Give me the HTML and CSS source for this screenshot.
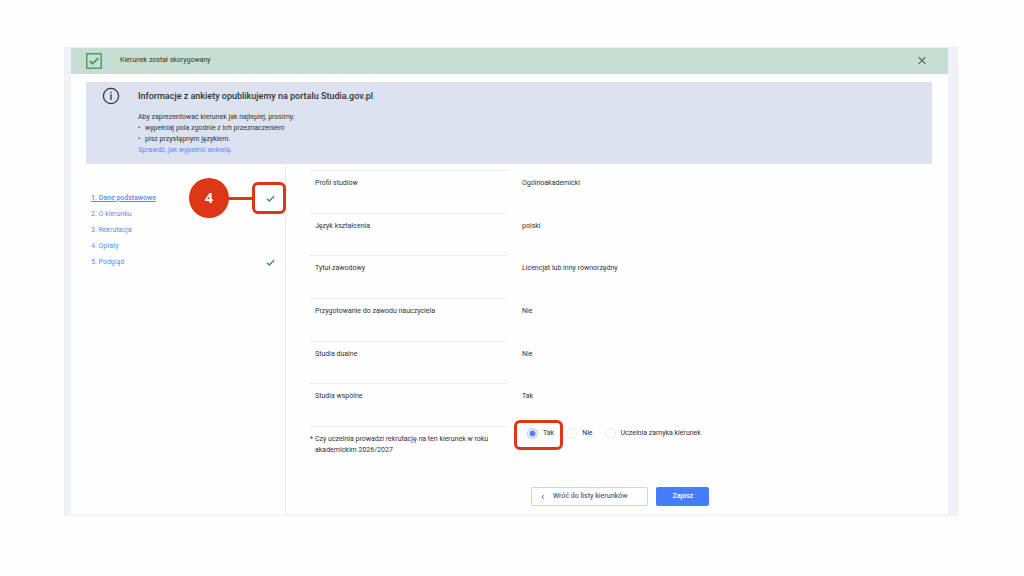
FILE: index.html
```html
<!DOCTYPE html>
<html lang="pl">
<head>
<meta charset="UTF-8" />
<title>Ankieta kierunku</title>
<link rel="stylesheet" href="styles.css">
</head>
<body>
<div class="frame">
  <div class="alert" role="status">
    <svg class="alert-icon" viewBox="0 0 16 16">
      <rect x="0.75" y="0.75" width="14.5" height="14.5" />
      <path d="M3.8 8 L6.5 10.7 L12.2 5.2" stroke-width="2" />
    </svg>
    <span>Kierunek został skorygowany</span>
    <button class="close" aria-label="Zamknij">
      <svg viewBox="0 0 8 8"><path d="M1 1 L7 7 M7 1 L1 7" /></svg>
    </button>
  </div>

  <section class="info">
    <svg class="info-icon" viewBox="0 0 18 18">
      <circle cx="9" cy="9" r="7.6" />
      <path d="M9 7.3 V13 M9 4.8 V6.2" />
    </svg>
    <div>
      <h1>Informacje z ankiety opublikujemy na portalu Studia.gov.pl</h1>
      <p>Aby zaprezentować kierunek jak najlepiej, prosimy:</p>
      <ul>
        <li>wypełniaj pola zgodnie z ich przeznaczeniem</li>
        <li>pisz przystępnym językiem.</li>
      </ul>
      <a href="#">Sprawdź, jak wypełnić ankietę.</a>
    </div>
  </section>

  <div class="content">
    <nav class="steps">
      <div class="step">
        <a class="active" href="#">1. Dane podstawowe</a>
        <span class="marked">
          <svg class="check" viewBox="0 0 8 8"><path d="M0.8 4.2 L3 6.3 L7.3 1.8" /></svg>
          <span class="outline outline-step"></span>
          <span class="line"></span>
          <span class="badge">4</span>
        </span>
      </div>
      <div class="step"><a href="#">2. O kierunku</a></div>
      <div class="step"><a href="#">3. Rekrutacja</a></div>
      <div class="step"><a href="#">4. Opłaty</a></div>
      <div class="step">
        <a href="#">5. Podgląd</a>
        <svg class="check" viewBox="0 0 8 8"><path d="M0.8 4.2 L3 6.3 L7.3 1.8" /></svg>
      </div>
    </nav>

    <form class="form">
      <dl class="fields">
        <div class="row"><dt>Profil studiów</dt><dd>Ogólnoakademicki</dd></div>
        <div class="row"><dt>Język kształcenia</dt><dd>polski</dd></div>
        <div class="row"><dt>Tytuł zawodowy</dt><dd>Licencjat lub inny równorzędny</dd></div>
        <div class="row"><dt>Przygotowanie do zawodu nauczyciela</dt><dd>Nie</dd></div>
        <div class="row"><dt>Studia dualne</dt><dd>Nie</dd></div>
        <div class="row"><dt>Studia wspólne</dt><dd>Tak</dd></div>
      </dl>
      <div class="row question" role="radiogroup" aria-labelledby="q">
        <div class="question-label">
          <span class="star">*</span>
          <span id="q">Czy uczelnia prowadzi rekrutację na ten kierunek w roku akademickim 2026/2027</span>
        </div>
        <div class="options">
          <label class="marked"><input type="radio" name="rekrutacja" checked>Tak<span class="outline outline-radio"></span></label>
          <label><input type="radio" name="rekrutacja">Nie</label>
          <label><input type="radio" name="rekrutacja">Uczelnia zamyka kierunek</label>
        </div>
      </div>
      <div class="actions">
        <button type="button" class="btn back">
          <svg viewBox="0 0 4 6"><path d="M3 1 L1 3 L3 5" /></svg>
          Wróć do listy kierunków
        </button>
        <button type="button" class="btn save">Zapisz</button>
      </div>
    </form>
  </div>
</div>
</body>
</html>
```

FILE: styles.css
```css
* {
  box-sizing: border-box;
}
body {
  margin: 0;
  padding: 47px 66px 60px 64px;
  background: #fefefe;
  color: #303338;
  font-family: Roboto, "Liberation Sans", sans-serif;
  font-size: 7px;
  line-height: 11px;
}
h1, p, ul, dl, dd {
  margin: 0;
  padding: 0;
}
a {
  color: #5b8bff;
  text-decoration: none;
}
svg {
  fill: none;
  flex: none;
}
button, input {
  font: inherit;
  margin: 0;
}
.frame {
  border-left: 7px solid #f1f2f9;
  border-right: 10px solid #f1f2f9;
  border-bottom: 1px solid #f0f0f3;
  outline: 1px solid #ededf2;
  outline-offset: -1px;
}
.alert {
  display: flex;
  align-items: center;
  height: 27px;
  padding: 0 20px 0 15px;
  background: #c7dfd2;
}
.alert-icon {
  width: 16px;
  height: 16px;
  margin-right: 18px;
  stroke: #549b70;
  stroke-width: 1.5;
}
.close {
  display: flex;
  margin-left: auto;
  padding: 0;
  border: 0;
  background: none;
}
.close svg {
  width: 12px;
  height: 9px;
  stroke: #54585c;
}
.info {
  display: flex;
  gap: 18px;
  margin: 8px 16px 0 15px;
  padding: 5px 16px 7px;
  min-height: 82px;
  background: #dde2f0;
}
.info-icon {
  width: 18px;
  height: 18px;
  stroke: #35383d;
  stroke-width: 1.3;
}
.info h1 {
  margin: 3px 0 10px;
  font-size: 9px;
  font-weight: 500;
  line-height: 12px;
}
.info ul {
  list-style: none;
}
.info li {
  display: flex;
}
.info li::before {
  content: "•";
  width: 7px;
}
.info a {
  display: block;
}
.content {
  display: flex;
}
.steps {
  width: 215px;
  min-height: 350px;
  padding: 26px 10px 0 20px;
  border-right: 1px solid #e9e9ee;
}
.step {
  display: flex;
  justify-content: space-between;
  align-items: center;
  height: 16px;
}
.step .active {
  font-weight: 500;
  text-decoration: underline;
}
.check {
  display: block;
  width: 9px;
  height: 9px;
  stroke: #3f8f62;
  stroke-width: 1.2;
}
.marked {
  position: relative;
}
/* callouts drawn over the form */
.outline {
  position: absolute;
  border: 3px solid #db3615;
  border-radius: 6px;
  pointer-events: none;
}
.outline-step {
  inset: -12px -11px -11px -14px;
}
.line {
  position: absolute;
  top: 3px;
  right: 22px;
  width: 28px;
  height: 3px;
  background: #db3615;
}
.badge {
  position: absolute;
  top: -16px;
  right: 46px;
  width: 40px;
  height: 40px;
  border-radius: 50%;
  background: #db3615;
  color: #fff;
  font: bold 14px/40px "Noto Sans", sans-serif;
  text-align: center;
}
.form {
  flex: 1;
  padding: 6px 24px 9px;
}
.fields {
  display: grid;
  grid-auto-rows: 1fr;
  min-height: 256px;
}
.row {
  display: grid;
  grid-template-columns: 197px 1fr;
  gap: 15px;
}
.row dt, .question-label {
  border-top: 1px solid #ececf1;
}
.row dt {
  padding: 7px 5px 0;
}
.row dd {
  padding-top: 8px;
}
.question {
  height: 61px;
}
.question-label {
  display: flex;
  gap: 2px;
  padding-top: 7px;
}
.star {
  width: 3px;
}
.options {
  display: flex;
  align-items: flex-start;
  gap: 12px;
  padding: 2px 0 0 5px;
}
.options label {
  display: flex;
  align-items: center;
  gap: 5px;
}
.options input {
  appearance: none;
  width: 11px;
  height: 11px;
  border: 1px solid #e8e8ee;
  border-radius: 50%;
  background: #fff;
}
.options input:checked {
  border-color: #a9c3ff;
  background: radial-gradient(circle, #4580ff 0 2px, #fff 4px);
}
.outline-radio {
  inset: -8px -9px -11px -13px;
}
.actions {
  display: flex;
  gap: 8px;
  padding-left: 221px;
}
.btn {
  display: flex;
  align-items: center;
  justify-content: center;
  height: 19px;
  border-radius: 2px;
  font-weight: 500;
}
.back {
  gap: 8px;
  padding: 0 20px 0 9px;
  border: 1px solid #c3d5ff;
  background: #fff;
  color: #596579;
}
.back svg {
  width: 4px;
  height: 6px;
  stroke: #4580ff;
}
.save {
  padding: 0 16px;
  border: 0;
  background: #467dfa;
  color: #fff;
}
```
